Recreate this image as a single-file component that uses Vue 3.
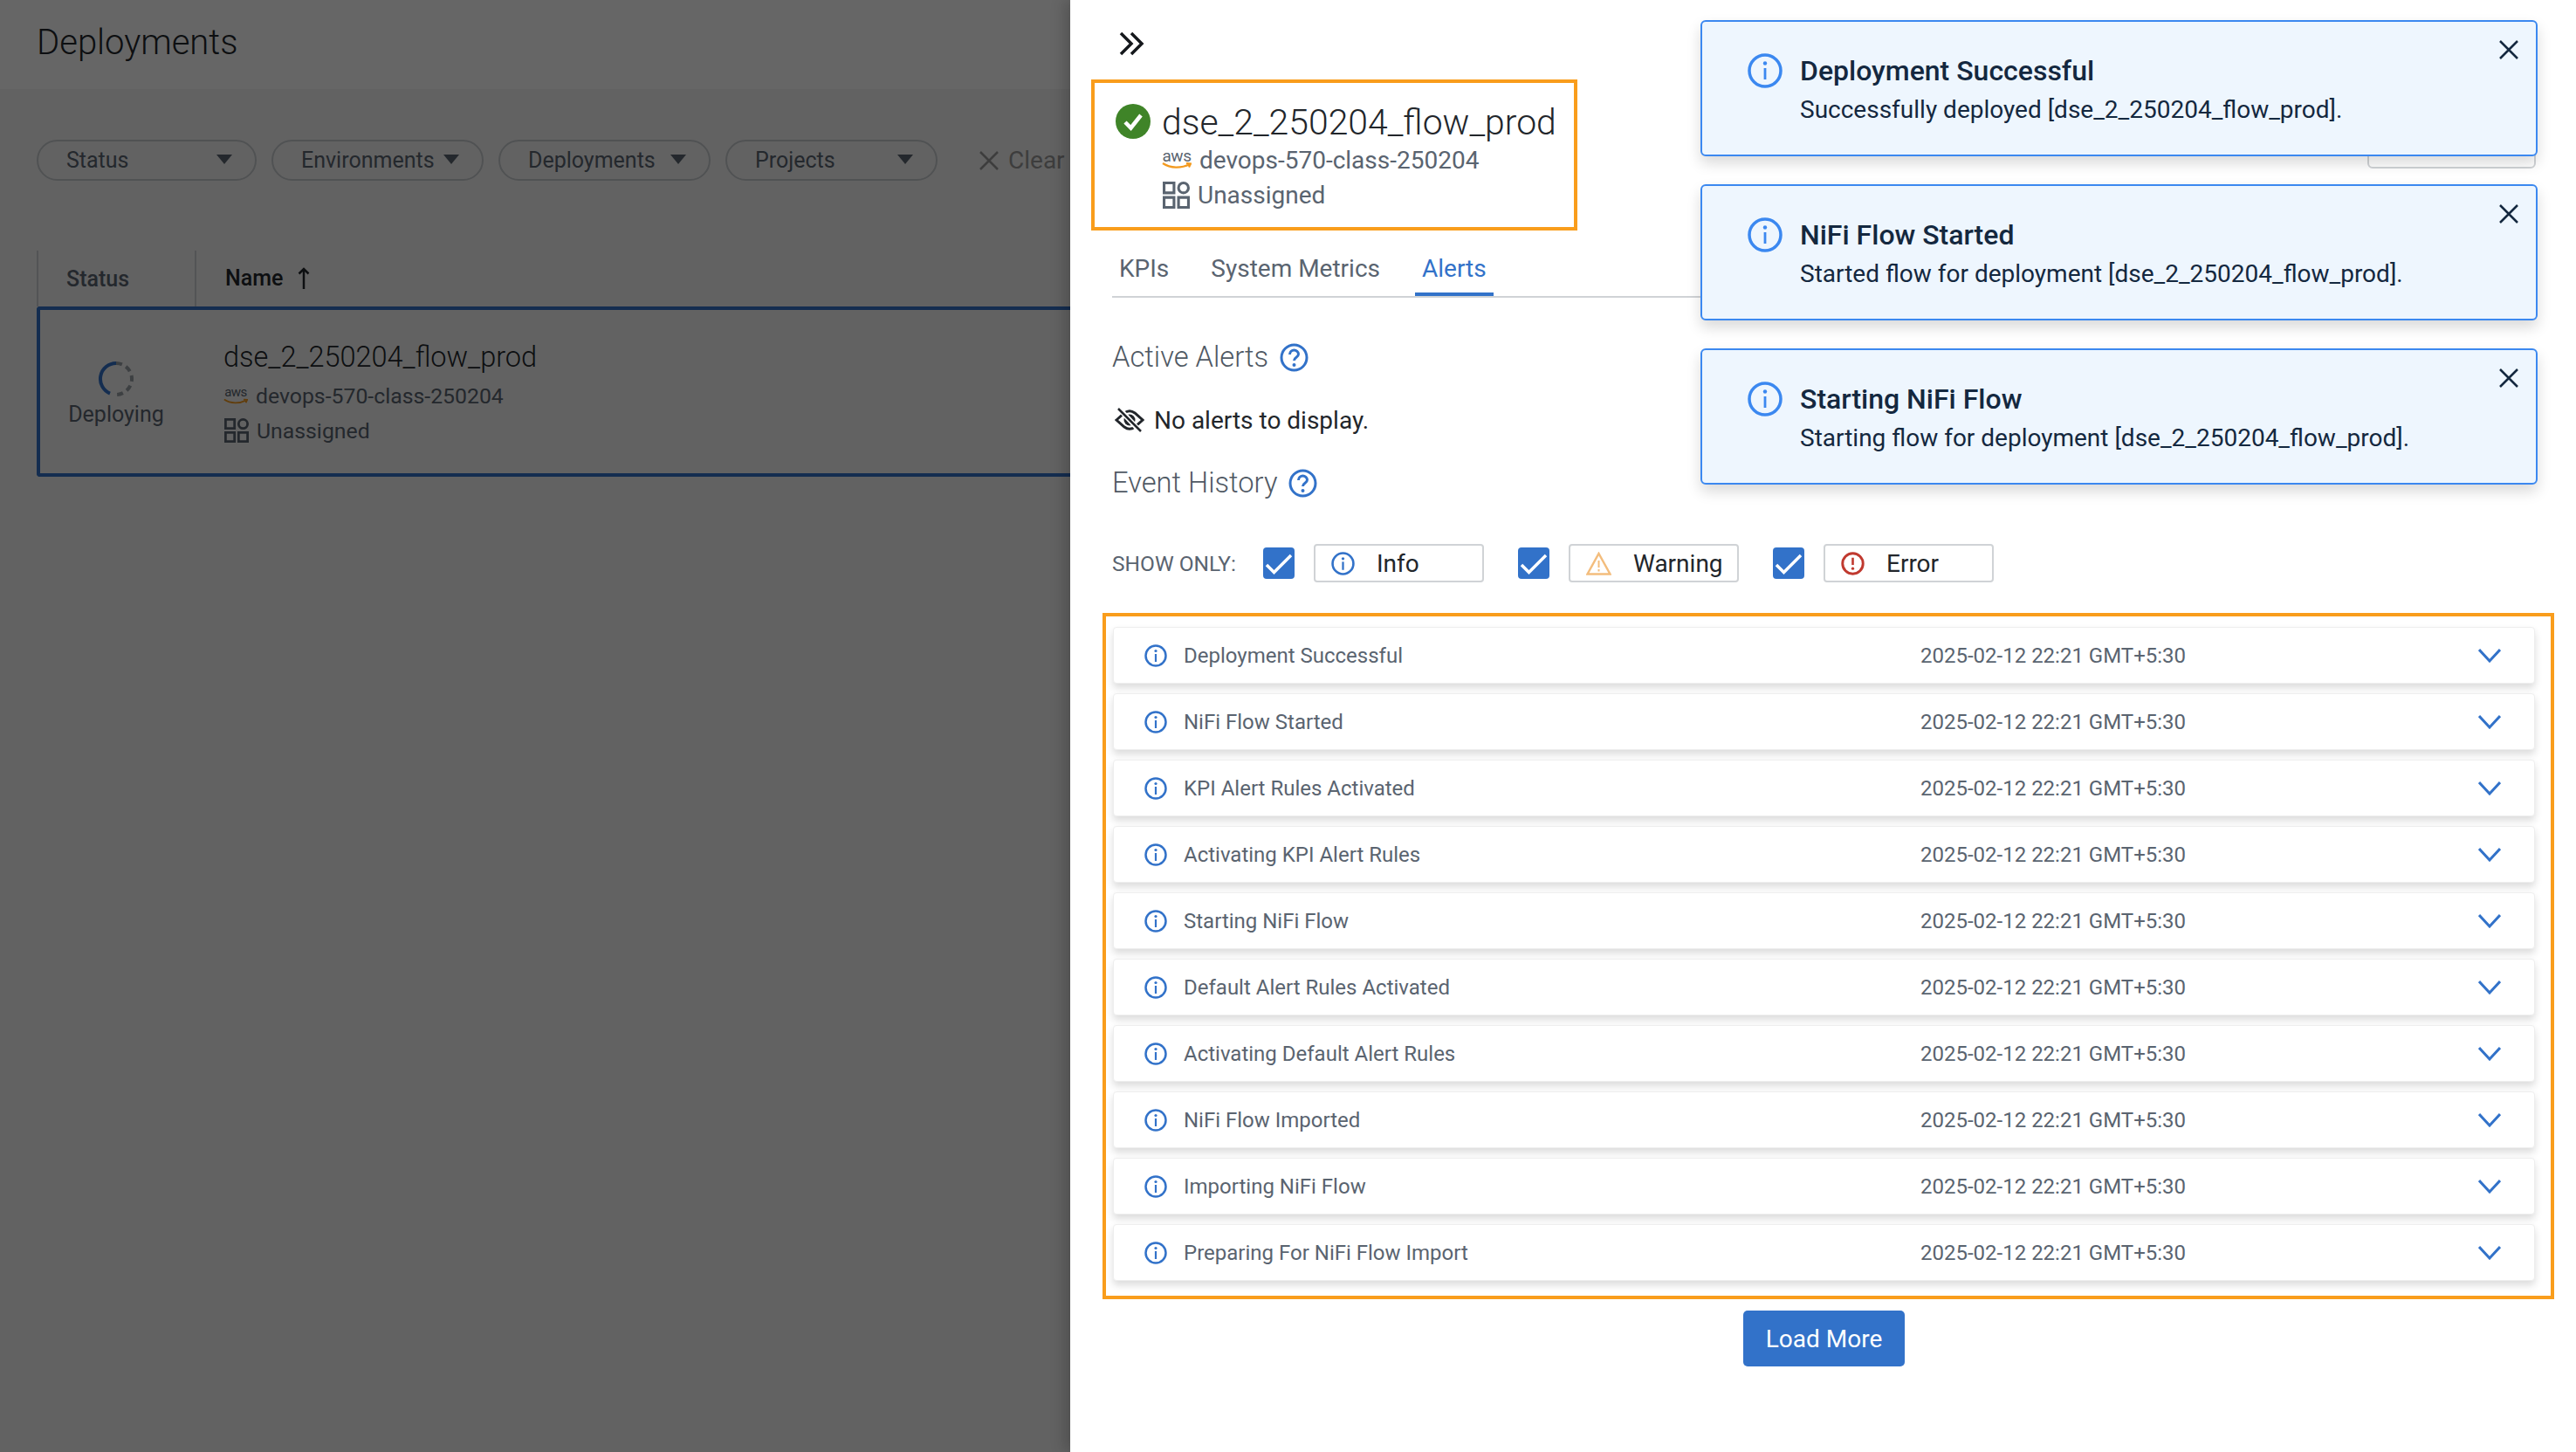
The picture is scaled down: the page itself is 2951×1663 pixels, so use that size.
<script setup>
const chips = [
  { label: 'Status', width: 252 },
  { label: 'Environments', width: 243 },
  { label: 'Deployments', width: 243 },
  { label: 'Projects', width: 243 }
]

const toasts = [
  { title: 'Deployment Successful', body: 'Successfully deployed [dse_2_250204_flow_prod].' },
  { title: 'NiFi Flow Started', body: 'Started flow for deployment [dse_2_250204_flow_prod].' },
  { title: 'Starting NiFi Flow', body: 'Starting flow for deployment [dse_2_250204_flow_prod].' }
]

const events = [
  'Deployment Successful',
  'NiFi Flow Started',
  'KPI Alert Rules Activated',
  'Activating KPI Alert Rules',
  'Starting NiFi Flow',
  'Default Alert Rules Activated',
  'Activating Default Alert Rules',
  'NiFi Flow Imported',
  'Importing NiFi Flow',
  'Preparing For NiFi Flow Import'
]
</script>

<template>
  <div class="app">
    <section class="page">
      <header class="pageHeader">Deployments</header>
      <div class="filters">
        <div v-for="c in chips" :key="c.label" class="chip" :style="{ width: c.width + 'px' }">
          <span>{{ c.label }}</span>
          <i class="caret"></i>
        </div>
        <div class="clear">
          <svg width="24" height="24" viewBox="0 0 24 24"><path d="M2 2l20 20M22 2L2 22" fill="none" stroke="#9a9a9a" stroke-width="2.500"/></svg>
          <span>Clear</span>
        </div>
      </div>
      <div class="tableHead">
        <div class="colStatus">Status</div>
        <div class="colName">
          Name
          <svg width="14" height="26" viewBox="0 0 14 26"><path d="M7 25V2M1.500 7.500L7 2l5.500 5.500" fill="none" stroke="#22262b" stroke-width="2.500"/></svg>
        </div>
      </div>
      <div class="tableRow">
        <div class="rowStatus">
          <svg width="42" height="42" viewBox="0 0 42 42">
            <path d="M21 3A18 18 0 0 0 14 37.600" fill="none" stroke="#3272c9" stroke-width="4"/>
            <path d="M21 3A18 18 0 0 1 21 39" fill="none" stroke="#9aa0a6" stroke-width="4" stroke-dasharray="7 5"/>
          </svg>
          <span>Deploying</span>
        </div>
        <div class="rowInfo">
          <div class="rowName">dse_2_250204_flow_prod</div>
          <div class="meta small">
            <span class="aws"><b>aws</b><svg viewBox="0 0 34 8"><path d="M1 1c9 6 21 6 31 1M28 1l5 .5-2 4" fill="none" stroke="#f39a1f" stroke-width="2.200"/></svg></span>
            devops-570-class-250204
          </div>
          <div class="meta small">
            <svg class="grid" viewBox="0 0 30 30"><path d="M1.500 1.500h11v11h-11zM1.500 17.500h11v11h-11zM17.500 17.500h11v11h-11z" fill="none" stroke="#5a6470" stroke-width="3"/><circle cx="23" cy="7" r="5.500" fill="none" stroke="#5a6470" stroke-width="3"/></svg>
            Unassigned
          </div>
        </div>
      </div>
      <div class="overlay"></div>
    </section>

    <section class="panel">
      <div class="collapse">
        <svg width="29" height="28" viewBox="0 0 29 28"><path d="M2 2l12 12L2 26M14 2l12 12-12 12" fill="none" stroke="#15181c" stroke-width="3.500"/></svg>
      </div>

      <div class="top">
        <div class="summary">
          <div class="okIcon">
            <svg width="40" height="40" viewBox="0 0 40 40"><circle cx="20" cy="20" r="20" fill="#3f8428"/><path d="M11 21l6.500 6.500L29 13" fill="none" stroke="#fff" stroke-width="4.500"/></svg>
          </div>
          <div>
            <div class="summaryName">dse_2_250204_flow_prod</div>
            <div class="meta">
              <span class="aws"><b>aws</b><svg viewBox="0 0 34 8"><path d="M1 1c9 6 21 6 31 1M28 1l5 .5-2 4" fill="none" stroke="#f39a1f" stroke-width="2.200"/></svg></span>
              devops-570-class-250204
            </div>
            <div class="meta">
              <svg class="grid" viewBox="0 0 30 30"><path d="M1.500 1.500h11v11h-11zM1.500 17.500h11v11h-11zM17.500 17.500h11v11h-11z" fill="none" stroke="#5a6470" stroke-width="3"/><circle cx="23" cy="7" r="5.500" fill="none" stroke="#5a6470" stroke-width="3"/></svg>
              Unassigned
            </div>
          </div>
        </div>
        <div class="hiddenBtn"></div>
      </div>

      <div class="tabs">
        <span class="tab">KPIs</span>
        <span class="tab">System Metrics</span>
        <span class="tab active">Alerts</span>
      </div>

      <div class="heading activeHeading">
        Active Alerts
        <svg class="help" viewBox="0 0 33 33"><circle cx="16.500" cy="16.500" r="14.500" fill="none" stroke="#3272c9" stroke-width="3"/><path d="M11.500 13c0-3 2.500-5 5-5s5 2 5 4.500c0 4-5 3.500-5 7.500" fill="none" stroke="#3272c9" stroke-width="3"/><circle cx="16.500" cy="25" r="2" fill="#3272c9"/></svg>
      </div>

      <div class="noAlerts">
        <svg width="34" height="28" viewBox="0 0 34 28"><path d="M2 14L11 6C15 3 19 3 23 6l9 8-9 8c-4 3-8 3-12 0z" fill="none" stroke="#22262b" stroke-width="3"/><circle cx="17" cy="14" r="6.500" fill="#22262b"/><path d="M5 1l24 26" stroke="#fff" stroke-width="6"/><path d="M4 1l26 26" stroke="#22262b" stroke-width="2.500"/></svg>
        No alerts to display.
      </div>

      <div class="heading eventHeading">
        Event History
        <svg class="help" viewBox="0 0 33 33"><circle cx="16.500" cy="16.500" r="14.500" fill="none" stroke="#3272c9" stroke-width="3"/><path d="M11.500 13c0-3 2.500-5 5-5s5 2 5 4.500c0 4-5 3.500-5 7.500" fill="none" stroke="#3272c9" stroke-width="3"/><circle cx="16.500" cy="25" r="2" fill="#3272c9"/></svg>
      </div>

      <div class="showOnly">
        <span class="showLabel">SHOW ONLY:</span>
        <label class="check"><svg width="36" height="36" viewBox="0 0 36 36"><path d="M4 20l8.500 8.500L32 9" fill="none" stroke="#fff" stroke-width="3.500"/></svg></label>
        <div class="filterBtn">
          <svg width="27" height="27" viewBox="0 0 26 26"><circle cx="13" cy="13" r="11.500" fill="none" stroke="#3272c9" stroke-width="2.500"/><circle cx="13" cy="7.500" r="1.600" fill="#3272c9"/><path d="M13 11v9" stroke="#3272c9" stroke-width="2.200"/></svg>
          <span>Info</span>
        </div>
        <label class="check"><svg width="36" height="36" viewBox="0 0 36 36"><path d="M4 20l8.500 8.500L32 9" fill="none" stroke="#fff" stroke-width="3.500"/></svg></label>
        <div class="filterBtn">
          <svg width="29" height="27" viewBox="0 0 29 27"><path d="M14.500 2L27.500 25.500H1.500z" fill="none" stroke="#f3bd7d" stroke-width="2.500"/><path d="M14.500 10v8M14.500 20v2.500" stroke="#f3bd7d" stroke-width="2"/></svg>
          <span>Warning</span>
        </div>
        <label class="check"><svg width="36" height="36" viewBox="0 0 36 36"><path d="M4 20l8.500 8.500L32 9" fill="none" stroke="#fff" stroke-width="3.500"/></svg></label>
        <div class="filterBtn">
          <svg width="27" height="27" viewBox="0 0 26 26"><circle cx="13" cy="13" r="11.300" fill="none" stroke="#c0392f" stroke-width="2.800"/><path d="M13 6.500v8" stroke="#c0392f" stroke-width="2.500"/><circle cx="13" cy="18.500" r="1.600" fill="#c0392f"/></svg>
          <span>Error</span>
        </div>
      </div>

      <div class="events">
        <div v-for="e in events" :key="e" class="eventRow">
          <svg class="eventIcon" width="26" height="26" viewBox="0 0 26 26"><circle cx="13" cy="13" r="11.500" fill="none" stroke="#3272c9" stroke-width="2.500"/><circle cx="13" cy="7.500" r="1.600" fill="#3272c9"/><path d="M13 11v9" stroke="#3272c9" stroke-width="2.200"/></svg>
          <span class="eventName">{{ e }}</span>
          <span class="eventTime">2025-02-12 22:21 GMT+5:30</span>
          <svg class="chevron" width="26" height="16" viewBox="0 0 26 16"><path d="M1 1l12 13L25 1" fill="none" stroke="#3272c9" stroke-width="3"/></svg>
        </div>
      </div>

      <div class="loadWrap"><button class="loadMore">Load More</button></div>
    </section>

    <div class="toasts">
      <div v-for="t in toasts" :key="t.title" class="toast">
        <svg class="toastIcon" width="40" height="40" viewBox="0 0 40 40"><circle cx="20" cy="20" r="18" fill="none" stroke="#3b88f0" stroke-width="3.500"/><circle cx="20" cy="11.500" r="2.200" fill="#3b88f0"/><path d="M20 17v13" stroke="#3b88f0" stroke-width="2.800"/></svg>
        <div>
          <div class="toastTitle">{{ t.title }}</div>
          <div class="toastBody">{{ t.body }}</div>
        </div>
        <svg class="toastClose" width="22" height="22" viewBox="0 0 22 22"><path d="M1 1l20 20M21 1L1 21" fill="none" stroke="#14283f" stroke-width="2.500"/></svg>
      </div>
    </div>
  </div>
</template>

<style>
html, body {
  margin: 0;
  background: #fff;
}
</style>

<style scoped>
.app {
  position: relative;
  display: flex;
  width: 2951px;
  height: 1663px;
  overflow: hidden;
  font-family: Roboto, "Liberation Sans", sans-serif;
  color: #22262b;
}

/* left page, dimmed by the overlay */
.page {
  position: relative;
  flex: 0 0 1226px;
  overflow: hidden;
  background: #f6f6f6;
}
.overlay {
  position: absolute;
  inset: 0;
  background: rgba(0, 0, 0, 0.6);
}
.pageHeader {
  height: 102px;
  box-sizing: border-box;
  padding: 26px 0 0 42px;
  background: #fff;
  font-size: 40px;
  line-height: 46px;
  font-weight: 300;
}
.filters {
  display: flex;
  align-items: center;
  gap: 17px;
  height: 47px;
  margin: 58px 0 0 42px;
  font-size: 25px;
  color: #5a6470;
  white-space: nowrap;
}
.chip {
  flex: none;
  display: flex;
  align-items: center;
  justify-content: space-between;
  height: 47px;
  box-sizing: border-box;
  padding: 0 26px 0 32px;
  border: 2px solid #c8ccd0;
  border-radius: 24px;
}
.caret {
  width: 0;
  height: 0;
  margin-top: -2px;
  border-left: 9px solid transparent;
  border-right: 9px solid transparent;
  border-top: 11px solid #5a6470;
}
.clear {
  display: flex;
  align-items: center;
  gap: 10px;
  margin-left: 30px;
  font-size: 28px;
  color: #9a9a9a;
}
.tableHead {
  display: flex;
  height: 64px;
  margin: 80px 0 0 42px;
  font-size: 25px;
  font-weight: 500;
  line-height: 66px;
}
.colStatus {
  width: 183px;
  box-sizing: border-box;
  padding-left: 32px;
  border-left: 2px solid #d0d3d6;
  border-right: 2px solid #d0d3d6;
  color: #5a6470;
}
.colName {
  display: flex;
  align-items: center;
  gap: 17px;
  padding-left: 33px;
}
.tableRow {
  display: flex;
  height: 195px;
  box-sizing: border-box;
  margin-left: 42px;
  border: 4px solid #3272c9;
  border-right: 0;
  border-radius: 4px 0 0 4px;
  background: #f6f6f6;
}
.rowStatus {
  flex: 0 0 174px;
  display: flex;
  flex-direction: column;
  align-items: center;
  padding-top: 58px;
  gap: 6px;
  font-size: 25px;
  line-height: 28px;
  color: #5a6470;
}
.rowInfo {
  padding: 32px 0 0 36px;
}
.rowName {
  font-size: 32.500px;
  font-weight: 300;
  line-height: 44px;
  margin-bottom: 2px;
}

/* drawer */
.panel {
  position: relative;
  flex: 1;
  min-width: 0;
  box-sizing: border-box;
  padding: 0 46px 0 48px;
  background: #fff;
  box-shadow: -6px 0 16px rgba(0, 0, 0, 0.2);
}
.collapse {
  height: 91px;
  box-sizing: border-box;
  padding: 36px 0 0 8px;
}
.top {
  display: flex;
  justify-content: space-between;
  height: 173px;
  margin-left: -24px;
}
.summary {
  display: flex;
  width: 557px;
  box-sizing: border-box;
  padding: 24px 0 0 24px;
  border: 4px solid #f99d1c;
}
.okIcon {
  height: 40px;
  margin-right: 13px;
}
.summaryName {
  padding-top: 1px;
  font-size: 40.900px;
  font-weight: 300;
  line-height: 40px;
  white-space: nowrap;
}
.meta {
  display: flex;
  align-items: center;
  gap: 9px;
  height: 40px;
  font-size: 28px;
  color: #5a6470;
  white-space: nowrap;
}
.summaryName + .meta {
  margin-top: 3px;
}
.meta.small {
  font-size: 24.800px;
  gap: 9px;
}
.aws {
  display: inline-flex;
  flex-direction: column;
  align-items: center;
  width: 34px;
  line-height: 14px;
}
.aws b {
  font-size: 19px;
  font-weight: 400;
  letter-spacing: -0.5px;
  color: #5a6470;
}
.aws svg {
  width: 34px;
  height: 8px;
}
.meta.small .aws {
  width: 28px;
}
.meta.small .aws b {
  font-size: 15px;
}
.meta.small .aws svg {
  width: 28px;
}
.grid {
  width: 31px;
  height: 31px;
  margin-left: 1px;
}
.meta.small .grid {
  width: 28px;
  height: 28px;
  margin-left: 1px;
}
.hiddenBtn {
  width: 193px;
  height: 64px;
  margin-top: 38px;
  box-sizing: border-box;
  border: 2px solid #d0d3d6;
  border-radius: 6px;
}
.tabs {
  display: flex;
  gap: 32px;
  height: 77px;
  box-sizing: border-box;
  padding-top: 26px;
  border-bottom: 2px solid #d0d3d6;
  font-size: 28px;
  line-height: 36px;
  color: #5a6470;
}
.tab {
  height: 45px;
  padding: 0 8px;
}
.tab.active {
  color: #3272c9;
  border-bottom: 4px solid #3272c9;
}
.heading {
  display: flex;
  align-items: center;
  gap: 15px;
  height: 40px;
  font-size: 32.700px;
  font-weight: 300;
  color: #505964;
}
.activeHeading {
  margin-top: 48px;
}
.eventHeading {
  margin-top: 36px;
}
.help {
  width: 33px;
  height: 33px;
  margin-left: -2px;
}
.noAlerts {
  display: flex;
  align-items: center;
  gap: 11px;
  height: 32px;
  margin: 36px 0 0 3px;
  font-size: 28px;
}
.showOnly {
  display: flex;
  align-items: center;
  height: 44px;
  margin-top: 50px;
}
.showLabel {
  width: 173px;
  font-size: 24.500px;
  color: #5a6470;
  white-space: nowrap;
}
.check {
  display: flex;
  align-items: center;
  justify-content: center;
  width: 36px;
  height: 36px;
  border-radius: 4px;
  background: #3272c9;
  margin-right: 22px;
}
.filterBtn {
  display: flex;
  align-items: center;
  gap: 25px;
  width: 195px;
  height: 44px;
  box-sizing: border-box;
  padding-left: 18px;
  margin-right: 39px;
  border: 2px solid #d0d3d6;
  border-radius: 4px;
  font-size: 28px;
}
.events {
  display: flex;
  flex-direction: column;
  gap: 11px;
  margin: 35px -21px 0 -11px;
  padding: 12px 18px 17px 8px;
  border: 4px solid #f99d1c;
}
.eventRow {
  display: flex;
  align-items: center;
  height: 65px;
  box-sizing: border-box;
  padding: 0 38px 0 35px;
  border: 1px solid #eeeeee;
  border-radius: 4px;
  background: #fff;
  box-shadow: 0 5px 8px rgba(0, 0, 0, 0.14);
  font-size: 24px;
  color: #5a6470;
}
.eventIcon {
  flex: none;
  margin-right: 19px;
}
.eventName {
  width: 844px;
  flex: none;
  padding-top: 1px;
}
.eventTime {
  flex: 1;
  padding-top: 1px;
}
.chevron {
  flex: none;
}
.loadWrap {
  display: flex;
  justify-content: center;
  margin-top: 13px;
}
.loadMore {
  width: 185px;
  height: 64px;
  border: 0;
  border-radius: 5px;
  background: #3272c9;
  color: #fff;
  font-family: inherit;
  font-size: 28px;
}

/* toasts float over the drawer */
.toasts {
  position: absolute;
  top: 23px;
  left: 1948px;
  display: flex;
  flex-direction: column;
  gap: 32px;
  width: 959px;
}
.toast {
  position: relative;
  display: flex;
  height: 156px;
  box-sizing: border-box;
  padding: 36px 0 0 52px;
  border: 2px solid #3b88f0;
  border-radius: 6px;
  background: #eef6fe;
  box-shadow: 0 8px 16px rgba(0, 0, 0, 0.15);
  color: #14283f;
}
.toastIcon {
  flex: none;
  margin-right: 20px;
}
.toastTitle {
  font-size: 32px;
  font-weight: 500;
  line-height: 40px;
}
.toastBody {
  margin-top: 6px;
  font-size: 28px;
  line-height: 38px;
}
.toastClose {
  position: absolute;
  top: 21px;
  right: 20px;
}
</style>
